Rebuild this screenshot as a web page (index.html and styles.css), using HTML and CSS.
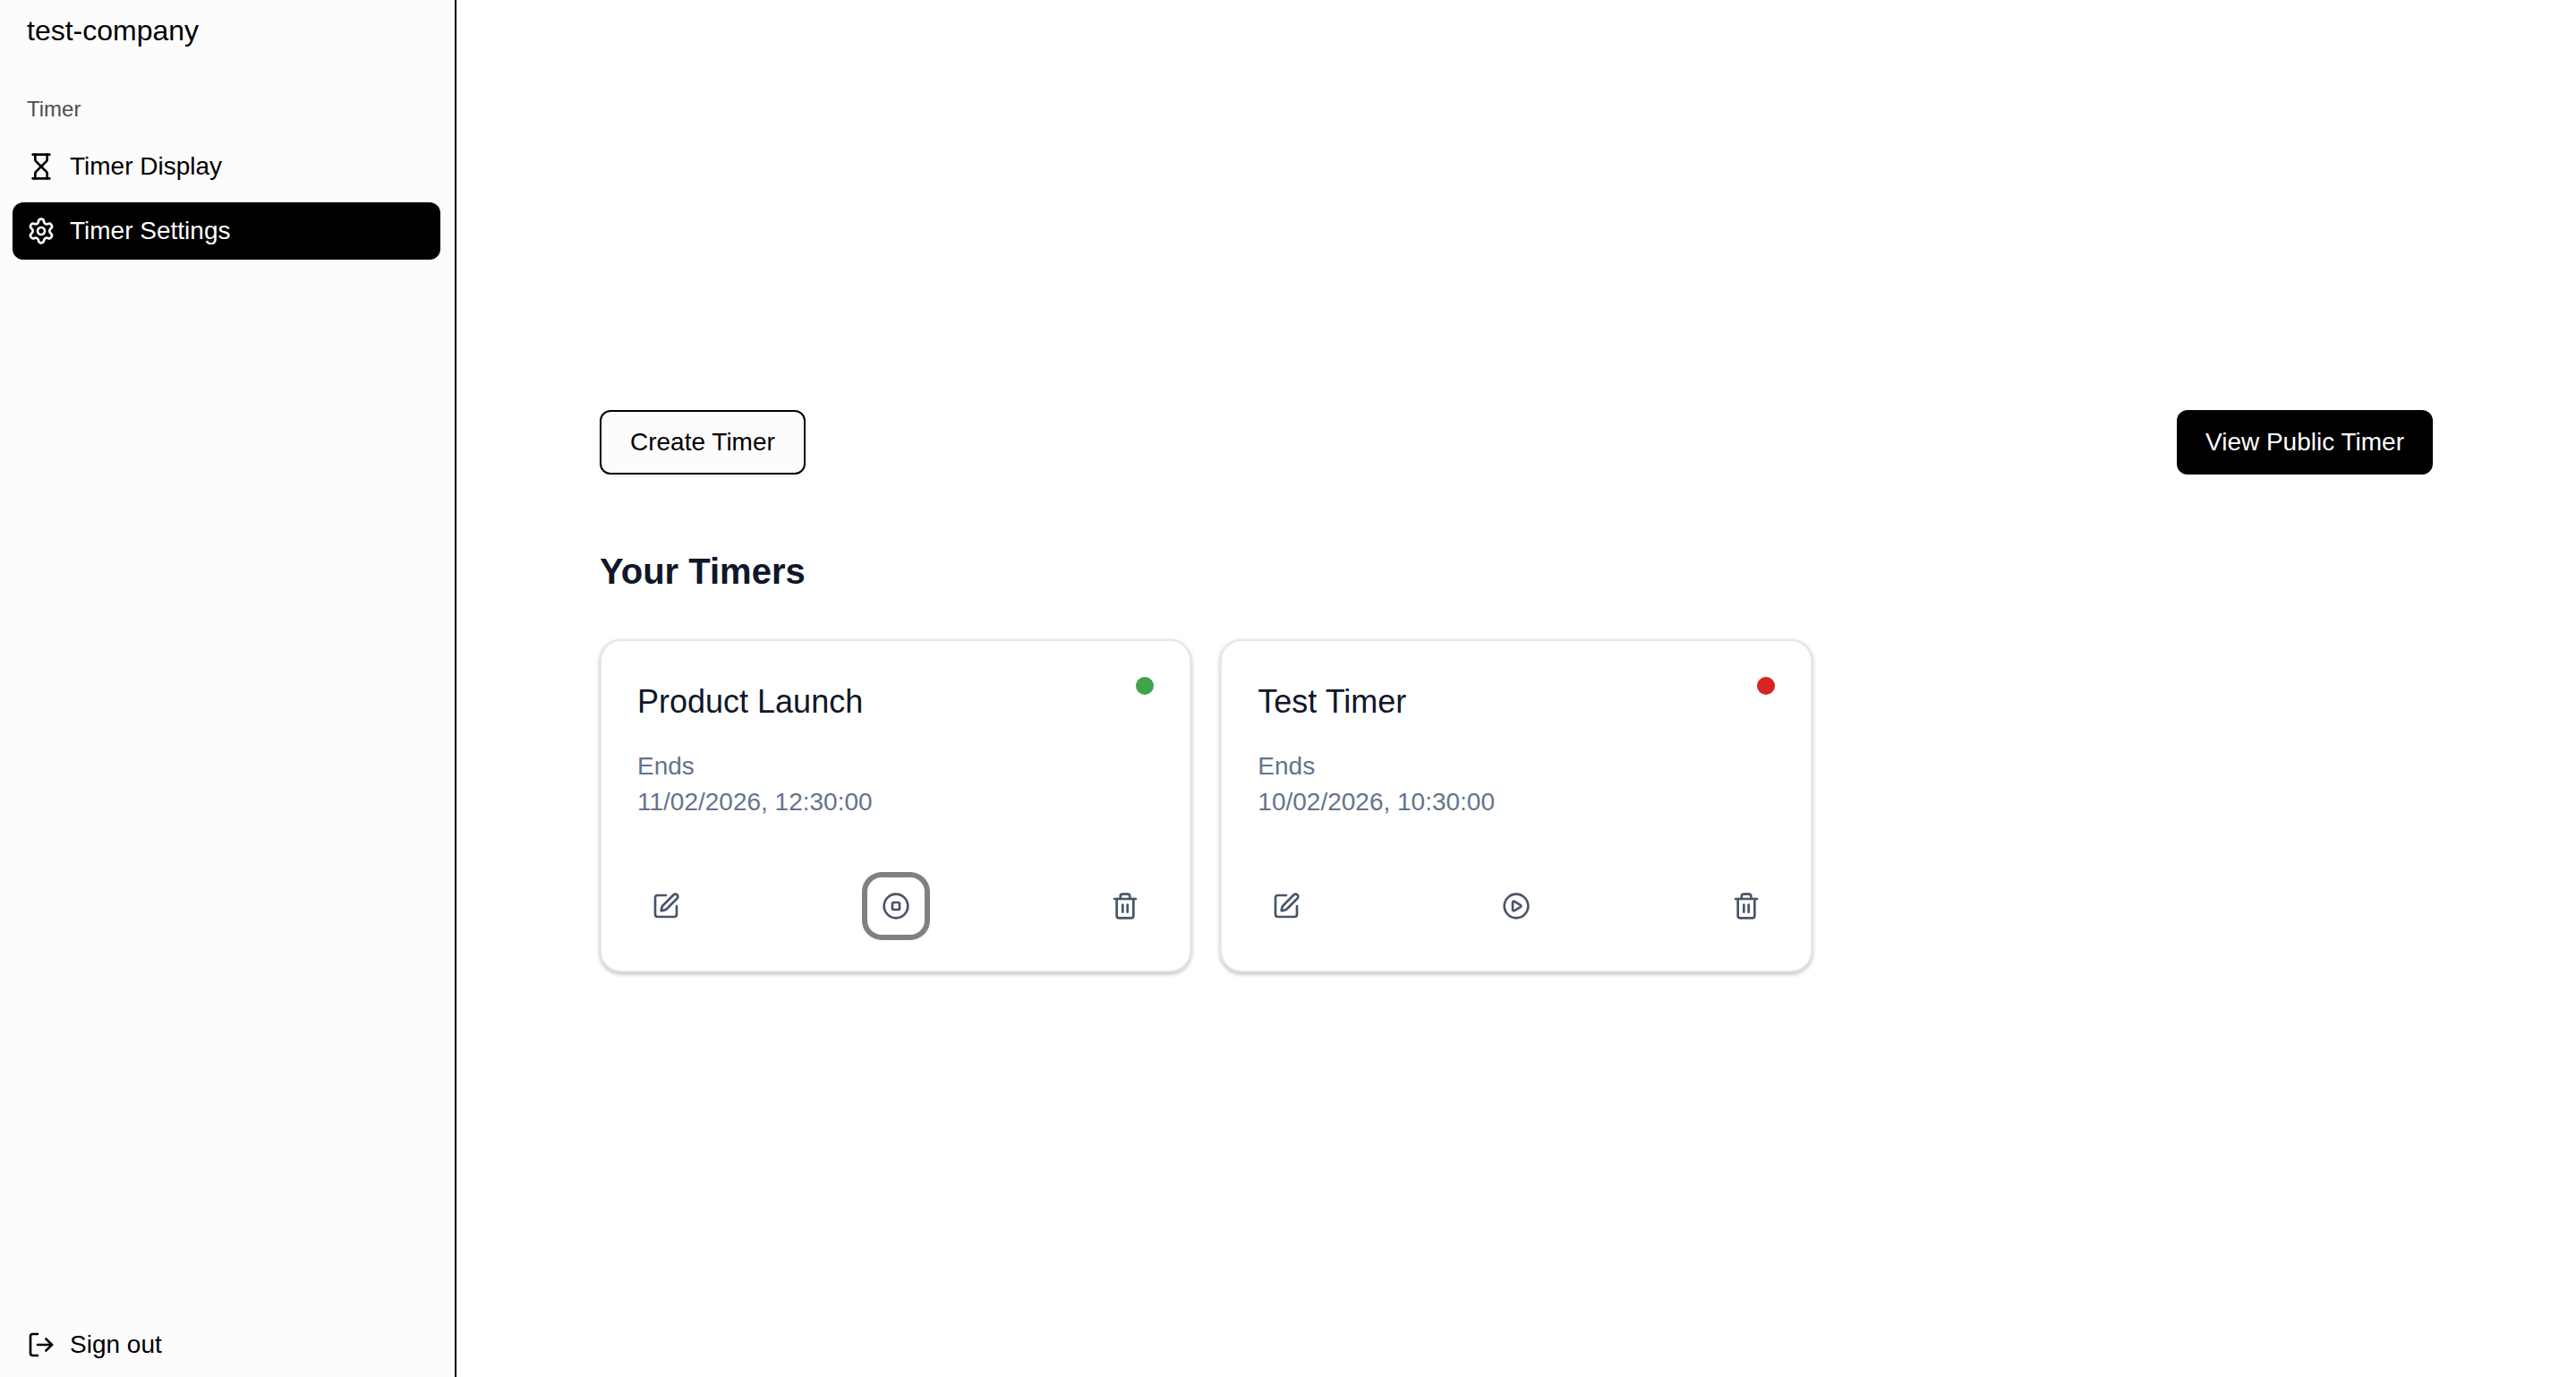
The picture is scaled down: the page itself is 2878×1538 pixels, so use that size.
FILE: index.html
```html
<!DOCTYPE html>
<html lang="en">
<head>
<meta charset="utf-8">
<meta name="viewport" content="width=device-width, initial-scale=1">
<title>Timer Settings</title>
<link rel="stylesheet" href="styles.css">
</head>
<body>
<div class="app">
  <aside class="sidebar">
    <div class="company">test-company</div>
    <nav class="nav" aria-labelledby="nav-label">
      <div class="nav-label" id="nav-label">Timer</div>
      <ul class="nav-list">
        <li><a class="nav-item" href="#display">
          <svg class="icon" viewBox="0 0 24 24" aria-hidden="true"><path d="M5 22h14"/><path d="M5 2h14"/><path d="M17 22v-4.172a2 2 0 0 0-.586-1.414L12 12l-4.414 4.414A2 2 0 0 0 7 17.828V22"/><path d="M7 2v4.172a2 2 0 0 0 .586 1.414L12 12l4.414-4.414A2 2 0 0 0 17 6.172V2"/></svg>
          <span>Timer Display</span></a></li>
        <li><a class="nav-item nav-item-active" href="#settings" aria-current="page">
          <svg class="icon" viewBox="0 0 24 24" aria-hidden="true"><path d="M9.671 4.136a2.34 2.34 0 0 1 4.659 0 2.34 2.34 0 0 0 3.319 1.915 2.34 2.34 0 0 1 2.33 4.033 2.34 2.34 0 0 0 0 3.831 2.34 2.34 0 0 1-2.33 4.033 2.34 2.34 0 0 0-3.319 1.915 2.34 2.34 0 0 1-4.659 0 2.34 2.34 0 0 0-3.32-1.915 2.34 2.34 0 0 1-2.33-4.033 2.34 2.34 0 0 0 0-3.831A2.34 2.34 0 0 1 6.35 6.051a2.34 2.34 0 0 0 3.319-1.915"/><circle cx="12" cy="12" r="3"/></svg>
          <span>Timer Settings</span></a></li>
      </ul>
    </nav>
    <button class="nav-item" type="button">
      <svg class="icon" viewBox="0 0 24 24" aria-hidden="true"><path d="m16 17 5-5-5-5"/><path d="M21 12H9"/><path d="M9 21H5a2 2 0 0 1-2-2V5a2 2 0 0 1 2-2h4"/></svg>
      <span>Sign out</span></button>
  </aside>

  <main class="main">
    <div class="content">
      <div class="toolbar">
        <button class="btn btn-outline" type="button">Create Timer</button>
        <a class="btn btn-solid" href="#public">View Public Timer</a>
      </div>
      <h1 class="heading">Your Timers</h1>
      <div class="cards">
        <article class="card">
          <div class="card-head">
            <h2 class="card-title">Product Launch</h2>
            <span class="dot dot-running" role="img" aria-label="Running"></span>
          </div>
          <p class="card-ends">Ends<br>11/02/2026, 12:30:00</p>
          <div class="card-actions">
            <button class="icon-btn" type="button" aria-label="Edit">
              <svg class="icon" viewBox="0 0 24 24" aria-hidden="true"><path d="M12 3H5a2 2 0 0 0-2 2v14a2 2 0 0 0 2 2h14a2 2 0 0 0 2-2v-7"/><path d="M18.375 2.625a1 1 0 0 1 3 3l-9.013 9.014a2 2 0 0 1-.853.505l-2.873.84a.5.5 0 0 1-.62-.62l.84-2.873a2 2 0 0 1 .506-.852z"/></svg></button>
            <button class="icon-btn icon-btn-focus" type="button" aria-label="Stop">
              <svg class="icon" viewBox="0 0 24 24" aria-hidden="true"><circle cx="12" cy="12" r="10"/><rect x="9" y="9" width="6" height="6" rx="1"/></svg></button>
            <button class="icon-btn" type="button" aria-label="Delete">
              <svg class="icon" viewBox="0 0 24 24" aria-hidden="true"><path d="M10 11v6"/><path d="M14 11v6"/><path d="M19 6v14a2 2 0 0 1-2 2H7a2 2 0 0 1-2-2V6"/><path d="M3 6h18"/><path d="M8 6V4a2 2 0 0 1 2-2h4a2 2 0 0 1 2 2v2"/></svg></button>
          </div>
        </article>
        <article class="card">
          <div class="card-head">
            <h2 class="card-title">Test Timer</h2>
            <span class="dot dot-stopped" role="img" aria-label="Stopped"></span>
          </div>
          <p class="card-ends">Ends<br>10/02/2026, 10:30:00</p>
          <div class="card-actions">
            <button class="icon-btn" type="button" aria-label="Edit">
              <svg class="icon" viewBox="0 0 24 24" aria-hidden="true"><path d="M12 3H5a2 2 0 0 0-2 2v14a2 2 0 0 0 2 2h14a2 2 0 0 0 2-2v-7"/><path d="M18.375 2.625a1 1 0 0 1 3 3l-9.013 9.014a2 2 0 0 1-.853.505l-2.873.84a.5.5 0 0 1-.62-.62l.84-2.873a2 2 0 0 1 .506-.852z"/></svg></button>
            <button class="icon-btn" type="button" aria-label="Start">
              <svg class="icon" viewBox="0 0 24 24" aria-hidden="true"><path d="M9 9.003a1 1 0 0 1 1.517-.859l4.997 2.997a1 1 0 0 1 0 1.718l-4.997 2.997A1 1 0 0 1 9 14.996z"/><circle cx="12" cy="12" r="10"/></svg></button>
            <button class="icon-btn" type="button" aria-label="Delete">
              <svg class="icon" viewBox="0 0 24 24" aria-hidden="true"><path d="M10 11v6"/><path d="M14 11v6"/><path d="M19 6v14a2 2 0 0 1-2 2H7a2 2 0 0 1-2-2V6"/><path d="M3 6h18"/><path d="M8 6V4a2 2 0 0 1 2-2h4a2 2 0 0 1 2 2v2"/></svg></button>
          </div>
        </article>
      </div>
    </div>
  </main>
</div>
</body>
</html>
```
FILE: styles.css
```css
*, *::before, *::after {
  box-sizing: border-box;
}

body {
  margin: 0;
  font-family: "Liberation Sans", Arial, Helvetica, sans-serif;
  font-size: 28px;
  line-height: 40px;
  color: #000;
  background: #fff;
}

h1, h2, p, ul {
  margin: 0;
  padding: 0;
}

button {
  font: inherit;
  color: inherit;
  cursor: pointer;
}

a {
  color: inherit;
  text-decoration: none;
}

.app {
  display: grid;
  grid-template-columns: 510px 1fr;
  min-height: 100vh;
}

.icon {
  flex: none;
  width: 32px;
  height: 32px;
  fill: none;
  stroke: currentColor;
  stroke-width: 2;
  stroke-linecap: round;
  stroke-linejoin: round;
}

/* Sidebar */
.sidebar {
  display: flex;
  flex-direction: column;
  gap: 24px;
  padding: 2px 16px 4px 14px;
  border-right: 2px solid #000;
  background: #fcfcfc;
}

.company {
  padding: 0 16px;
  font-size: 32px;
  line-height: 64px;
}

.nav {
  flex: 1;
}

.nav-label {
  padding: 0 16px;
  font-size: 24px;
  line-height: 64px;
  color: #4d4d4d;
}

.nav-list {
  display: flex;
  flex-direction: column;
  gap: 8px;
  list-style: none;
}

.nav-item {
  display: flex;
  align-items: center;
  gap: 16px;
  width: 100%;
  height: 64px;
  padding: 0 16px;
  border: 0;
  border-radius: 12px;
  background: none;
  text-align: left;
}

.nav-item-active {
  color: #fff;
  background: #000;
}

/* Main area */
.main {
  display: flex;
  align-items: center;
  justify-content: center;
  padding: 6px 32px 0;
}

.content {
  width: 100%;
  max-width: 2048px;
}

.toolbar {
  display: flex;
  justify-content: space-between;
}

.btn {
  display: flex;
  align-items: center;
  height: 72px;
  padding: 0 32px;
  border: 0;
  border-radius: 12px;
}

.btn-outline {
  border: 2px solid #000;
  background: #fcfcfc;
  box-shadow: 0 2px 4px rgba(0, 0, 0, 0.05);
}

.btn-solid {
  color: #fff;
  background: #000;
}

.heading {
  margin: 80px 0 48px;
  font-size: 40px;
  line-height: 56px;
  color: #0f172a;
}

/* Timer cards */
.cards {
  display: grid;
  grid-template-columns: repeat(3, 1fr);
  gap: 32px;
}

.card {
  padding: 40px;
  border: 2px solid #e2e8f0;
  border-radius: 24px;
  background: #fff;
  box-shadow: 0 2px 4px rgba(0, 0, 0, 0.18), 0 2px 6px rgba(0, 0, 0, 0.1);
}

.card-head {
  display: flex;
  justify-content: space-between;
  margin-bottom: 24px;
}

.card-title {
  font-size: 36px;
  font-weight: 400;
  line-height: 56px;
  color: #0f172a;
}

.dot {
  width: 20px;
  height: 20px;
  border-radius: 50%;
}

.dot-running {
  background: #40a44c;
}

.dot-stopped {
  background: #d62422;
}

.card-ends {
  margin-bottom: 64px;
  color: #64748b;
}

.card-actions {
  display: flex;
  justify-content: space-between;
}

.icon-btn {
  display: grid;
  place-items: center;
  width: 64px;
  height: 64px;
  padding: 0;
  border: 0;
  border-radius: 16px;
  background: none;
  color: #475569;
}

.icon-btn-focus {
  box-shadow: 0 0 0 6px #808080;
}
```
